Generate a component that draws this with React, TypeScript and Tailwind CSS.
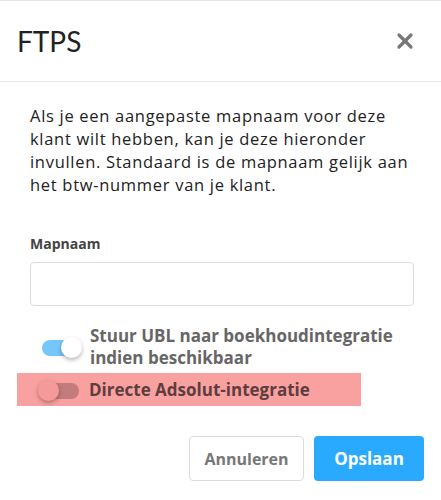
import { X } from 'lucide-react'

function Toggle({ on, danger }: { on: boolean; danger?: boolean }) {
  return (
    <div className="relative h-[22px] w-[42px] shrink-0">
      <div
        className={
          'absolute left-[2px] top-[4px] h-[16px] w-[38px] rounded-full ' +
          (on ? 'bg-[#74c6fb]' : danger ? 'bg-[#c47b7b]' : 'bg-[#cfcfcf]')
        }
      />
      <div
        className={
          'absolute top-[1px] h-[21px] w-[21px] rounded-full shadow-[0_2px_4px_rgba(0,0,0,0.3)] ' +
          (on ? 'left-[21px] bg-white' : danger ? 'left-[-1px] bg-[#f59a9a]' : 'left-[-1px] bg-white')
        }
      />
    </div>
  )
}

export default function App() {
  return (
    <div className="h-[500px] w-[441px] bg-white font-['Open_Sans',sans-serif]">
      <div className="flex h-[82px] items-center justify-between border-y border-[#e6e6e6] pl-[17px] pr-[24px]">
        <h2 className="font-['Lato',sans-serif] text-[28px] font-normal leading-none text-[#222]">FTPS</h2>
        <X className="h-[24px] w-[24px] text-[#777]" strokeWidth={3.2} />
      </div>

      <div className="px-[30px] pt-[22px]">
        <p className="text-[16.5px] leading-[23px] tracking-[0.7px] text-[#222]">
          Als je een aangepaste mapnaam voor deze
          <br />
          klant wilt hebben, kan je deze hieronder
          <br />
          invullen. Standaard is de mapnaam gelijk aan
          <br />
          het btw-nummer van je klant.
        </p>

        <label className="mt-[39px] block text-[14px] font-bold leading-[18px] text-[#444]">Mapnaam</label>
        <input className="mt-[9px] block h-[44px] w-[384px] rounded-[4px] border border-[#dcdcdc] outline-none" />
      </div>

      <div className="mt-[19px] flex items-center gap-[8px] pl-[40px]">
        <Toggle on />
        <span className="text-[17px] font-bold leading-[22px] text-[#666]">
          Stuur UBL naar boekhoudintegratie
          <br />
          indien beschikbaar
        </span>
      </div>

      <div className="ml-[17px] mt-[4px] flex h-[33px] w-[344px] items-center gap-[8px] bg-[#f9a0a0] pl-[22px]">
        <Toggle on={false} danger />
        <span className="text-[17px] font-bold leading-[22px] text-[#5e3d3d]">Directe Adsolut-integratie</span>
      </div>

      <div className="mt-[30px] flex justify-end gap-[10px] pr-[17px]">
        <button className="h-[45px] w-[115px] rounded-[4px] border border-[#dcdcdc] bg-white text-[16px] font-bold text-[#777]">
          Annuleren
        </button>
        <button className="h-[45px] w-[110px] rounded-[4px] bg-[#29aaff] text-[17px] font-bold text-white">
          Opslaan
        </button>
      </div>
    </div>
  )
}
